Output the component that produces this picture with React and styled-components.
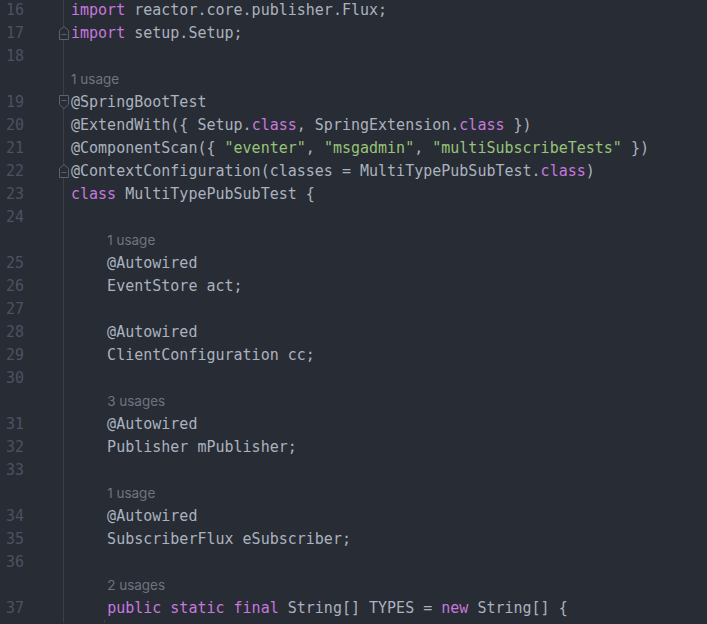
import React from 'react';
import styled, { createGlobalStyle } from 'styled-components';

const GlobalStyle = createGlobalStyle`
  html, body {
    margin: 0;
    padding: 0;
    background: #282c34;
    overflow: hidden;
  }
`;

const Editor = styled.div`
  display: flex;
  flex-direction: column;
  width: 707px;
  height: 624px;
  margin-top: -1px;
  background: #282c34;
  font-family: "DejaVu Sans Mono", "Liberation Mono", monospace;
  font-size: 15px;
  color: #abb2bf;
`;

const Row = styled.div`
  display: flex;
  height: 23px;
  line-height: 23px;
  flex-shrink: 0;
`;

const Gutter = styled.div`
  position: relative;
  width: 64px;
  flex-shrink: 0;
  border-right: 1px solid #3b4048;
  padding-left: 6px;
  box-sizing: border-box;
  color: #4b5263;
`;

const Code = styled.div`
  padding-left: 7px;
  white-space: pre;
`;

const Token = styled.span`
  color: ${(p) =>
    p.$kind === 'kw' ? '#c678dd' : p.$kind === 'str' ? '#98c379' : '#abb2bf'};
`;

const Hint = styled.span`
  font-family: Inter, "Noto Sans", sans-serif;
  font-size: 13.5px;
  color: #6e7480;
`;

const FoldIcon = styled.svg`
  position: absolute;
  right: -5.5px;
  top: 4px;
`;

const Guide = styled.span`
  display: inline-block;
  width: 1px;
  height: 23px;
  margin-left: 33px;
  background: #3b4048;
  vertical-align: top;
`;

function Fold({ dir }) {
  const d =
    dir === 'end'
      ? 'M0.5 4.5 L5 0.5 L9.5 4.5 V13.5 H0.5 Z'
      : 'M0.5 0.5 H9.5 V9.5 L5 13.5 L0.5 9.5 Z';
  const y = dir === 'end' ? 8.5 : 5.5;
  return (
    <FoldIcon width="10" height="14" viewBox="0 0 10 14">
      <path d={d} fill="#282c34" stroke="#5c6370" strokeWidth="1" />
      <path d={`M2.5 ${y} H7.5`} stroke="#5c6370" strokeWidth="1" />
    </FoldIcon>
  );
}

const k = (t) => ({ k: 'kw', t });
const s = (t) => ({ k: 'str', t });
const p = (t) => ({ k: 'plain', t });

const lines = [
  { n: 16, code: [k('import'), p(' reactor.core.publisher.Flux;')] },
  { n: 17, fold: 'end', code: [k('import'), p(' setup.Setup;')] },
  { n: 18, code: [] },
  { hint: '1 usage', indent: 0 },
  { n: 19, fold: 'start', code: [p('@SpringBootTest')] },
  {
    n: 20,
    code: [p('@ExtendWith({ Setup.'), k('class'), p(', SpringExtension.'), k('class'), p(' })')],
  },
  {
    n: 21,
    code: [
      p('@ComponentScan({ '),
      s('"eventer"'),
      p(', '),
      s('"msgadmin"'),
      p(', '),
      s('"multiSubscribeTests"'),
      p(' })'),
    ],
  },
  {
    n: 22,
    fold: 'end',
    code: [p('@ContextConfiguration(classes = MultiTypePubSubTest.'), k('class'), p(')')],
  },
  { n: 23, code: [k('class'), p(' MultiTypePubSubTest {')] },
  { n: 24, code: [] },
  { hint: '1 usage', indent: 4 },
  { n: 25, code: [p('    @Autowired')] },
  { n: 26, code: [p('    EventStore act;')] },
  { n: 27, code: [] },
  { n: 28, code: [p('    @Autowired')] },
  { n: 29, code: [p('    ClientConfiguration cc;')] },
  { n: 30, code: [] },
  { hint: '3 usages', indent: 4 },
  { n: 31, code: [p('    @Autowired')] },
  { n: 32, code: [p('    Publisher mPublisher;')] },
  { n: 33, code: [] },
  { hint: '1 usage', indent: 4 },
  { n: 34, code: [p('    @Autowired')] },
  { n: 35, code: [p('    SubscriberFlux eSubscriber;')] },
  { n: 36, code: [] },
  { hint: '2 usages', indent: 4 },
  {
    n: 37,
    code: [
      p('    '),
      k('public'),
      p(' '),
      k('static'),
      p(' '),
      k('final'),
      p(' String[] TYPES = '),
      k('new'),
      p(' String[] {'),
    ],
  },
  { guide: true, code: [] },
];

export default function App() {
  return (
    <>
      <GlobalStyle />
      <Editor>
        {lines.map((line, i) => (
          <Row key={i}>
            <Gutter>
              {line.n || ''}
              {line.fold && <Fold dir={line.fold} />}
            </Gutter>
            <Code>
              {line.hint ? (
                <>
                  {' '.repeat(line.indent)}
                  <Hint>{line.hint}</Hint>
                </>
              ) : (
                line.code.map((tok, j) => (
                  <Token key={j} $kind={tok.k}>
                    {tok.t}
                  </Token>
                ))
              )}
              {line.guide && <Guide />}
            </Code>
          </Row>
        ))}
      </Editor>
    </>
  );
}
